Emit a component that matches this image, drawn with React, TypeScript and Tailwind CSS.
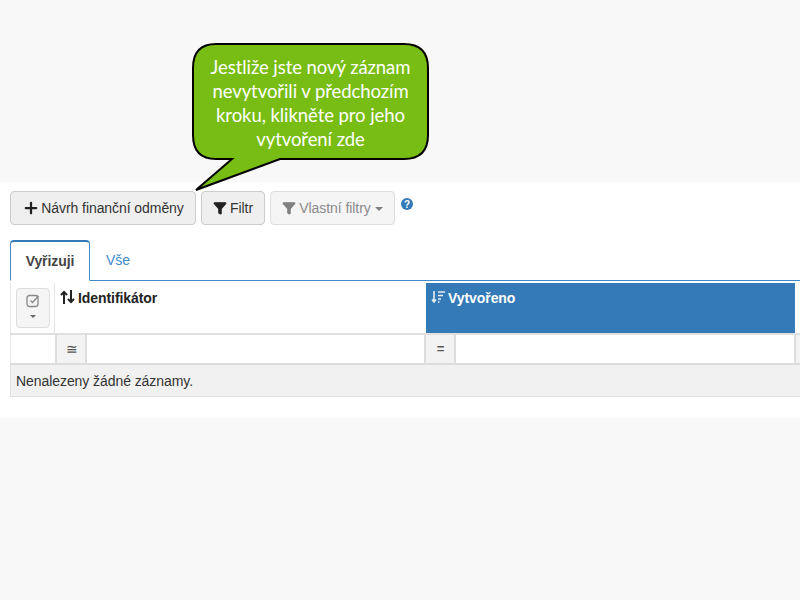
import { Filter, Plus } from "lucide-react";

const Bubble = () => (
  <div className="absolute left-[190px] top-[42px] w-[240px] h-[150px]">
    <svg width="240" height="150" viewBox="0 0 240 150" className="absolute inset-0">
      <path
        d="M26 2 H214 Q238 2 238 26 V93 Q238 117 214 117 H90 L6 148 L42 117 H26 Q3 117 3 93 V26 Q3 2 26 2 Z"
        fill="#78bd14"
        stroke="#000"
        strokeWidth="2"
        strokeLinejoin="miter"
      />
    </svg>
    <div className="absolute left-[3px] top-[13px] w-[235px] text-center text-white text-[18.5px] leading-[24px] font-['Lato',sans-serif]">
      Jestliže jste nový záznam
      <br />
      nevytvořili v předchozím
      <br />
      kroku, klikněte pro jeho
      <br />
      vytvoření zde
    </div>
  </div>
);

const App = () => {
  return (
    <div className="relative w-[800px] h-[600px] overflow-hidden bg-[#f8f8f8] font-['Liberation_Sans',Arial,sans-serif] text-[14px] tracking-[-0.07px] text-[#333]">
      <div className="h-[182px]" />
      <div className="h-[236px] bg-white pl-[10px] pt-[9px]">
        {/* Toolbar */}
        <div className="flex items-start gap-[5px] h-[34px]">
          <button className="flex items-center justify-center w-[186px] h-[34px] rounded border border-[#ccc] bg-[#efefef] text-[#333]">
            <Plus size={18} strokeWidth={3} className="mr-px text-[#222]" />
            Návrh finanční odměny
          </button>
          <button className="flex items-center justify-center w-[64px] h-[34px] rounded border border-[#ccc] bg-[#efefef] text-[#333]">
            <Filter size={14} fill="#222" stroke="#222" className="mr-[3px]" />
            Filtr
          </button>
          <button className="flex items-center justify-center w-[125px] h-[34px] rounded border border-[#ddd] bg-[#f5f5f5] text-[#8a8a8a]">
            <Filter size={14} fill="#808080" stroke="#808080" className="mr-[3px]" />
            Vlastní filtry
            <span className="ml-[4px] mt-[1px] border-x-[4px] border-x-transparent border-t-[4px] border-t-[#808080]" />
          </button>
          <svg width="12" height="12" viewBox="0 0 12 12" className="ml-px mt-[7px]">
            <circle cx="6" cy="6" r="6" fill="#337ab7" />
            <text x="6" y="9.5" textAnchor="middle" fontSize="10" fontWeight="700" fill="#fff" fontFamily="Liberation Sans">?</text>
          </svg>
        </div>

        {/* Tabs */}
        <div className="flex mt-[15px] mb-px h-[41px] border-b border-[#428bca]">
          <div className="w-[80px] h-[41px] flex items-center justify-center rounded-t border border-[#428bca] border-t-2 border-t-[#337ab7] border-b-white bg-white font-bold text-[#444]">
            Vyřizuji
          </div>
          <div className="ml-[16px] flex items-center text-[#428bca]">Vše</div>
        </div>

        {/* Table */}
        <div className="w-[790px] overflow-hidden">
          <div className="flex h-[53px] border-b-2 border-[#e0e0e0] pt-px">
            <div className="w-[45px] shrink-0 border-x border-[#e6e6e6] pt-[5px] pl-[5px]">
              <div className="w-[34px] h-[40px] rounded border border-[#ddd] bg-[#f5f5f5] flex flex-col items-center pt-[5px]">
                <svg width="14" height="14" viewBox="0 0 14 14" fill="none" stroke="#888" strokeWidth="1.3">
                  <rect x="1" y="1.5" width="11" height="11" rx="2.5" />
                  <path d="M4.5 6.5l2 2 6-6.5" />
                </svg>
                <span className="mt-[7px] border-x-[3px] border-x-transparent border-t-[3px] border-t-[#666]" />
              </div>
            </div>
            <div className="w-[370px] shrink-0 pl-[5px] pt-[5px] font-bold text-[#222] flex items-start">
              <svg width="15" height="14" viewBox="0 0 15 14" className="mt-[2px] mr-[3px]" fill="none" stroke="#222" strokeWidth="2">
                <path d="M4 14V2M1 5l3-3 3 3M11 0v12M8 9l3 3 3-3" />
              </svg>
              Identifikátor
            </div>
            <div className="w-[369px] shrink-0 ml-px pl-[5px] pt-[5px] h-[50px] bg-[#337ab7] text-white font-bold flex items-start">
              <svg width="15" height="14" viewBox="0 0 15 14" className="mt-[2px] mr-[2px]" fill="none" stroke="#e6eef6" strokeWidth="1.6">
                <path d="M3 1v11M1 9.5L3 12l2-2.5M7 2h7M7 5.5h5M7 9h3M7 12h1.5" />
              </svg>
              Vytvořeno
            </div>
          </div>
          <div className="flex h-[30px] border-b-2 border-[#ddd]">
            <div className="w-[45px] shrink-0 border-l border-[#e6e6e6]" />
            <div className="w-[32px] shrink-0 bg-[#f3f3f3] border-x-2 border-[#ddd] pl-px flex items-center justify-center text-[14px] text-[#555]">≅</div>
            <div className="w-[339px] shrink-0 bg-white border-r-2 border-[#ddd]" />
            <div className="w-[30px] shrink-0 bg-[#f3f3f3] border-r-2 border-[#ddd] pl-px flex items-center justify-center text-[13px] font-bold text-[#555]">=</div>
            <div className="w-[340px] shrink-0 bg-white border-r-2 border-[#ddd]" />
            <div className="flex-1 bg-[#f3f3f3]" />
          </div>
          <div className="h-[32px] bg-[#f1f1f1] border-b border-l border-[#e0e0e0] pl-[5px] pt-[2px] flex items-center text-[14px] text-[#333]">
            Nenalezeny žádné záznamy.
          </div>
        </div>
      </div>
      <Bubble />
    </div>
  );
};

export default App;
